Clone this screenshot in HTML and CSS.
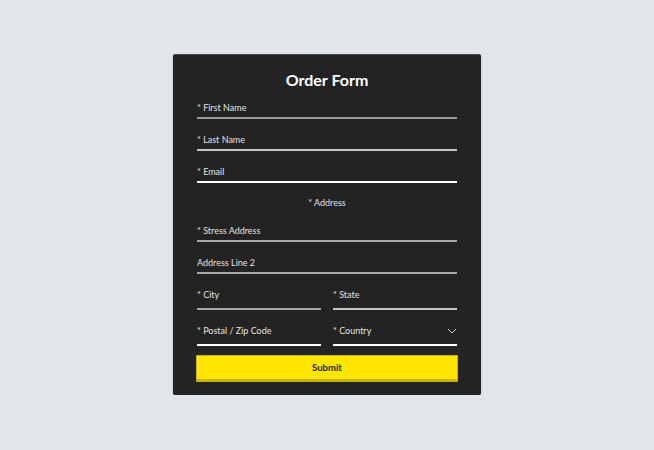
FILE: index.html
```html
<!DOCTYPE html>
<html lang="en">
<head>
<meta charset="utf-8">
<title>Order Form</title>
<link rel="stylesheet" href="styles.css">
</head>
<body>
<form class="card">
  <h1 class="title">Order Form</h1>
  <div class="field first line-a">* First Name</div>
  <div class="field line-b">* Last Name</div>
  <div class="field line-w">* Email</div>
  <div class="section">* Address</div>
  <div class="field street line-c">* Stress Address</div>
  <div class="field line-c">Address Line 2</div>
  <div class="row">
    <div class="field tall line-c">* City</div>
    <div class="field tall line-b">* State</div>
  </div>
  <div class="row">
    <div class="field tall line-w">* Postal / Zip Code</div>
    <div class="field tall line-w select">
      <span>* Country</span>
      <svg class="chev" width="10" height="6" viewBox="0 0 10 6"><path d="M0.8 0.8 L5 5 L9.2 0.8" fill="none" stroke="#d0d0d0" stroke-width="1"/></svg>
    </div>
  </div>
  <button type="button" class="submit">Submit</button>
</form>
</body>
</html>
```

FILE: styles.css
```css
html, body {
  margin: 0;
  padding: 0;
}
body {
  background: #e1e6ea;
  font-family: "Lato", "DejaVu Sans", sans-serif;
  padding-top: 54px;
}
.card {
  box-sizing: border-box;
  width: 308px;
  height: 341px;
  margin: 0 auto;
  background: #232323;
  border-radius: 2px;
  padding: 0 24px 13px;
  box-shadow: 0 1px 2px rgba(0,0,0,0.25);
  border-top: 1px solid #4a4a4a;
}
.title {
  margin: 0;
  padding-top: 18px;
  font-size: 16px;
  line-height: 14px;
  font-weight: 700;
  color: #ffffff;
  text-align: center;
}
.field {
  padding-top: 15px;
  padding-bottom: 3px;
  font-size: 9px;
  line-height: 12px;
  color: #e2e2e2;
  border-bottom: 2px solid #aaaaaa;
}
.field.street {
  padding-top: 16px;
}
.field.tall {
  padding-bottom: 7px;
}
.line-a { border-bottom-color: #9a9a9a; }
.line-b { border-bottom-color: #c4c4c4; }
.line-c { border-bottom-color: #a8a8a8; }
.line-w { border-bottom-color: #ffffff; }
.section {
  padding-top: 14px;
  font-size: 9px;
  line-height: 12px;
  color: #e2e2e2;
  text-align: center;
}
.row {
  display: grid;
  grid-template-columns: 1fr 1fr;
  column-gap: 12px;
}
.select {
  display: flex;
  justify-content: space-between;
  align-items: center;
}
.chev {
  display: block;
}
.submit {
  display: block;
  box-sizing: border-box;
  width: 262px;
  height: 27px;
  margin: 9px -1px 0;
  background: #ffe500;
  border: 1px solid #c9b300;
  border-bottom: 3px solid #c9b300;
  border-radius: 1px;
  font-family: "Lato", "DejaVu Sans", sans-serif;
  font-size: 9.5px;
  font-weight: 700;
  color: #1a1a1a;
  padding: 0;
}
```
